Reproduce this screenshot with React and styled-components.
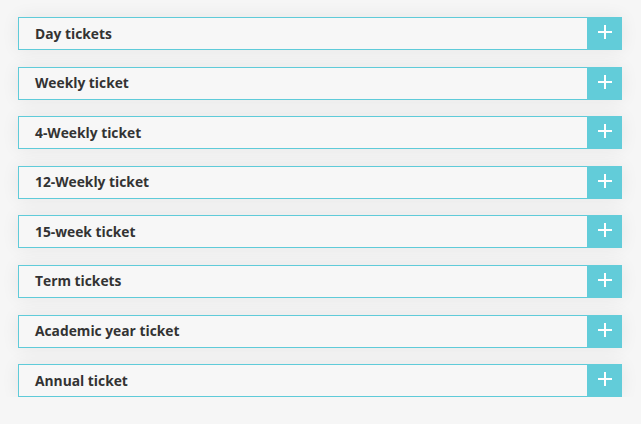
import React from "react";
import styled, { createGlobalStyle } from "styled-components";

const tickets = [
  "Day tickets",
  "Weekly ticket",
  "4-Weekly ticket",
  "12-Weekly ticket",
  "15-week ticket",
  "Term tickets",
  "Academic year ticket",
  "Annual ticket",
];

const GlobalStyle = createGlobalStyle`
  body {
    margin: 0;
    background: #f6f6f6;
    font-family: "Open Sans", "Lato", sans-serif;
  }
`;

export default function App() {
  return (
    <>
      <GlobalStyle />
      <List>
        {tickets.map((t) => (
          <Item key={t}>
            <Title>{t}</Title>
            <Toggle aria-label="Expand">
              <svg width="16" height="16" viewBox="0 0 16 16">
                <path d="M8 1v14M1 8h14" stroke="#fff" strokeWidth="2" />
              </svg>
            </Toggle>
          </Item>
        ))}
      </List>
    </>
  );
}

const List = styled.div`
  display: flex;
  flex-direction: column;
  gap: 16.6px;
  padding: 17px 19px 0 18px;
`;

const Item = styled.div`
  display: flex;
  align-items: stretch;
  height: 33px;
  box-sizing: border-box;
  border: 1px solid #5fcbd9;
  background: #f7f7f7;
  box-shadow: 0 0 18px rgba(0, 0, 0, 0.07);
`;

const Title = styled.div`
  flex: 1;
  display: flex;
  align-items: center;
  padding: 0 0 1px 16px;
  font-size: 13.8px;
  font-weight: 700;
  color: #333;
`;

const Toggle = styled.div`
  width: 35px;
  margin: -1px -1px -1px 0;
  background: #62ccd9;
  display: grid;
  place-items: center;
  padding-bottom: 3px;
  box-sizing: border-box;
`;
